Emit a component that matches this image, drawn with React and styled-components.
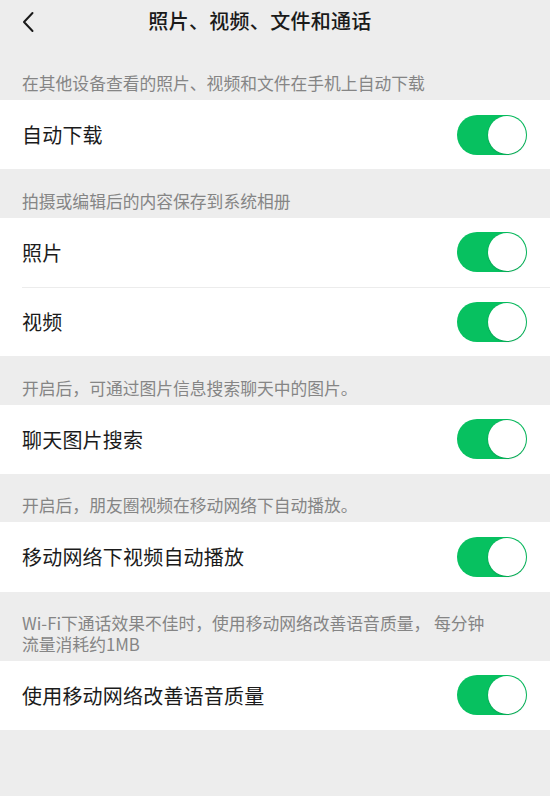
import React from "react"
import styled, { createGlobalStyle } from "styled-components"

const GlobalStyle = createGlobalStyle`
  html, body {
    margin: 0;
    padding: 0;
    background: #ededed;
  }
  body {
    font-family: "Noto Sans CJK SC", "Noto Sans", sans-serif;
  }
`

const sections = [
  {
    note: "在其他设备查看的照片、视频和文件在手机上自动下载",
    rows: ["自动下载"],
  },
  {
    note: "拍摄或编辑后的内容保存到系统相册",
    rows: ["照片", "视频"],
  },
  {
    note: "开启后，可通过图片信息搜索聊天中的图片。",
    rows: ["聊天图片搜索"],
  },
  {
    note: "开启后，朋友圈视频在移动网络下自动播放。",
    rows: ["移动网络下视频自动播放"],
  },
  {
    note: (
      <>
        Wi-Fi下通话效果不佳时，使用移动网络改善语音质量， 每分钟
        <br />
        流量消耗约1MB
      </>
    ),
    rows: ["使用移动网络改善语音质量"],
  },
]

const Toggle = () => (
  <Switch>
    <Knob />
  </Switch>
)

export default function App() {
  return (
    <Page>
      <GlobalStyle />
      <NavBar>
        <Back>
          <svg width="14" height="22" viewBox="0 0 14 22">
            <path
              d="M11.5 2 L3 11 L11.5 20"
              fill="none"
              stroke="#1a1a1a"
              strokeWidth="2"
              strokeLinecap="round"
              strokeLinejoin="round"
            />
          </svg>
        </Back>
        <Title>照片、视频、文件和通话</Title>
      </NavBar>

      {sections.map((section, i) => (
        <Section key={i}>
          <Note $first={i === 0}>{section.note}</Note>
          <Group>
            {section.rows.map((label, j) => (
              <Row key={label} $divider={j > 0}>
                <Label>{label}</Label>
                <Toggle />
              </Row>
            ))}
          </Group>
        </Section>
      ))}
    </Page>
  )
}

const Page = styled.div`
  width: 550px;
  min-height: 796px;
  background: #ededed;
`

const NavBar = styled.div`
  position: relative;
  height: 44px;
  display: flex;
  align-items: flex-start;
  justify-content: center;
  padding: 7px 30px 0 0;
  box-sizing: border-box;
`

const Back = styled.div`
  position: absolute;
  left: 21px;
  top: 11px;
  width: 14px;
  height: 22px;
  display: flex;
`

const Title = styled.div`
  font-size: 20px;
  line-height: 28px;
  font-weight: 500;
  color: #1a1a1a;
  letter-spacing: 0.3px;
`

const Section = styled.section`
  display: flex;
  flex-direction: column;
`

const Note = styled.div`
  padding: ${(p) => (p.$first ? "29px" : "21.2px")} 22px 6px;
  font-size: 16.8px;
  line-height: 21px;
  color: #858585;
`

const Group = styled.div`
  background: #ffffff;
`

const Row = styled.div`
  position: relative;
  height: 69.4px;
  display: flex;
  align-items: center;
  justify-content: space-between;
  padding: 0 23px 0 22px;

  ${(p) =>
    p.$divider &&
    `
    &::before {
      content: "";
      position: absolute;
      top: 0;
      left: 22px;
      right: 0;
      height: 1px;
      background: #ececec;
    }
  `}
`

const Label = styled.div`
  font-size: 20px;
  color: #1b1b1b;
  letter-spacing: 0.2px;
`

const Switch = styled.div`
  width: 70px;
  height: 40px;
  border-radius: 20px;
  background: #07c160;
  display: flex;
  align-items: center;
  justify-content: flex-end;
  padding: 0 1px;
  box-sizing: border-box;
`

const Knob = styled.div`
  width: 38px;
  height: 38px;
  border-radius: 50%;
  background: #ffffff;
  box-shadow: 0 0 0 0.5px rgba(0, 0, 0, 0.08), 0 1px 2px rgba(0, 0, 0, 0.12);
`
